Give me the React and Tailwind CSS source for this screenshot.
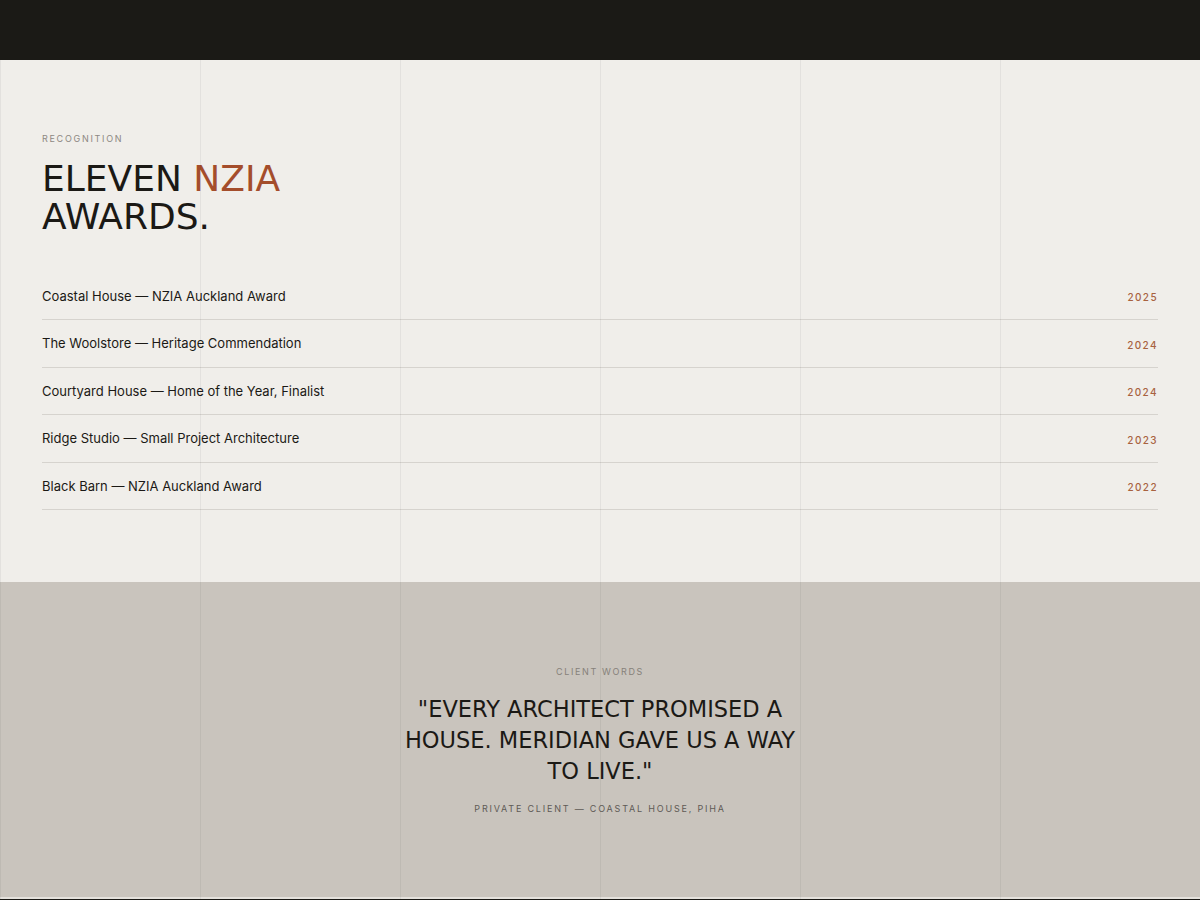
import React from 'react';

const awards = [
  { title: 'Coastal House — NZIA Auckland Award', year: '2025' },
  { title: 'The Woolstore — Heritage Commendation', year: '2024' },
  { title: 'Courtyard House — Home of the Year, Finalist', year: '2024' },
  { title: 'Ridge Studio — Small Project Architecture', year: '2023' },
  { title: 'Black Barn — NZIA Auckland Award', year: '2022' },
];

const display = "font-['DejaVu_Sans',sans-serif]";
const body = "font-['Inter',sans-serif]";

// faint six-column guide that sits over the whole page
const GridLines = () => (
  <div className="pointer-events-none fixed inset-0 z-10 grid grid-cols-6">
    {[0, 1, 2, 3, 4, 5].map((i) => (
      <div key={i} className="border-l border-black/[0.05]" />
    ))}
  </div>
);

export default function App() {
  return (
    <div className={`min-h-screen bg-[#f0eeea] text-[#1b1915] ${body}`}>
      <GridLines />

      <header className="relative z-20 h-[60px] bg-[#1b1a16]" />

      <section className="px-[42px] pt-[72px] pb-[72px]">
        <p className="text-[9px] uppercase tracking-[0.19em] text-[#8d8882]">Recognition</p>
        <h2 className={`mt-[14px] text-[36px] leading-[38px] uppercase ${display}`}>
          Eleven <span className="text-[#a44d2b]">NZIA</span>
          <br />
          Awards.
        </h2>

        <ul className="mt-[37px]">
          {awards.map((a) => (
            <li
              key={a.title}
              className="flex items-center justify-between border-b border-[#d6d3ce] py-[15px]"
            >
              <span className="text-[13px] leading-[16.5px] text-[#1b1915]">{a.title}</span>
              <span className="pt-[3px] text-[10px] leading-[12px] font-medium tracking-[0.14em] text-[#a8623f]">{a.year}</span>
            </li>
          ))}
        </ul>
      </section>

      <section className="flex h-[315px] flex-col items-center bg-[#c9c4bd] pt-[83px] text-center">
        <p className="text-[9px] uppercase tracking-[0.18em] text-[#86817a]">Client Words</p>
        <blockquote className={`mt-[15px] w-[410px] text-[22.5px] leading-[31px] uppercase ${display}`}>
          "Every architect promised a house. Meridian gave us a way to live."
        </blockquote>
        <p className="mt-[15px] text-[9px] uppercase tracking-[0.2em] text-[#5e5a55]">
          Private Client — Coastal House, Piha
        </p>
      </section>

      <footer className="h-[200px] border-t-2 border-[#e4e1dc] bg-[#1b1a16]" />
    </div>
  );
}
